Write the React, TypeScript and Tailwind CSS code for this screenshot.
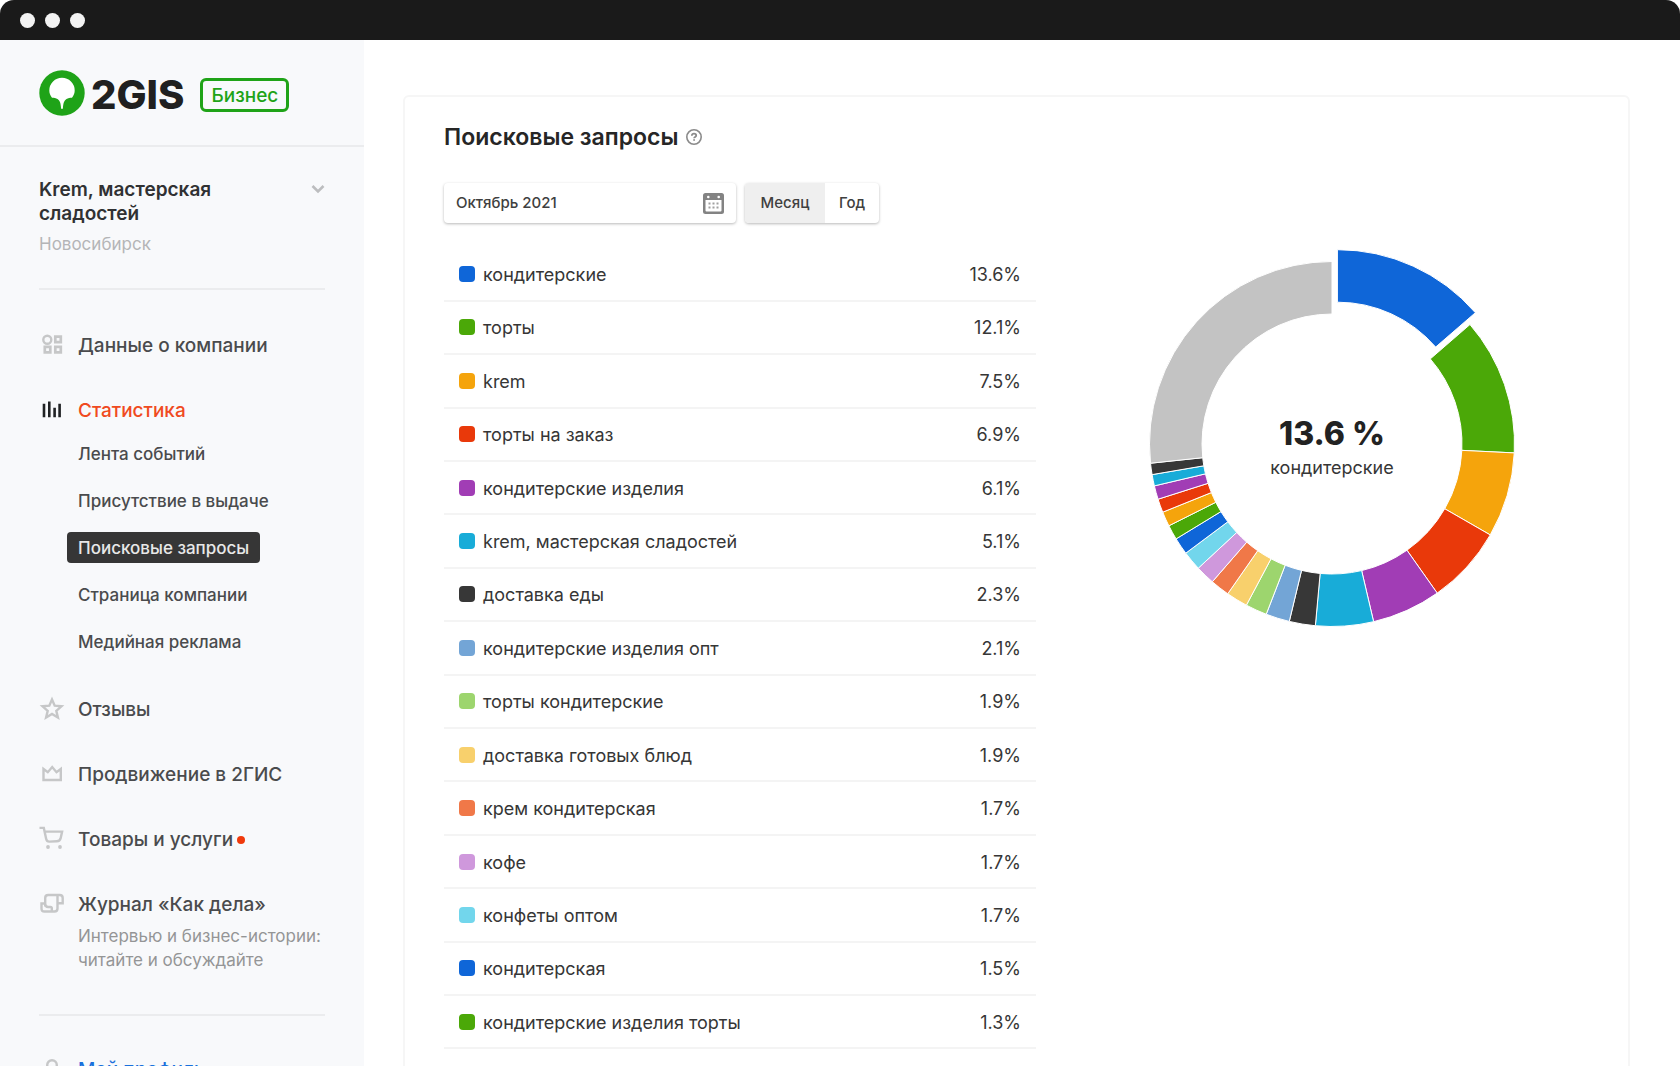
import { useState } from 'react';
import clsx from 'clsx';

type Query = { name: string; value: number; color: string };

const queries: Query[] = [
  { name: 'кондитерские', value: 13.6, color: '#0f66d8' },
  { name: 'торты', value: 12.1, color: '#4ba808' },
  { name: 'krem', value: 7.5, color: '#f5a40c' },
  { name: 'торты на заказ', value: 6.9, color: '#e9390a' },
  { name: 'кондитерские изделия', value: 6.1, color: '#a13db5' },
  { name: 'krem, мастерская сладостей', value: 5.1, color: '#18acd8' },
  { name: 'доставка еды', value: 2.3, color: '#373737' },
  { name: 'кондитерские изделия опт', value: 2.1, color: '#73a5d6' },
  { name: 'торты кондитерские', value: 1.9, color: '#9dd56e' },
  { name: 'доставка готовых блюд', value: 1.9, color: '#f8d06c' },
  { name: 'крем кондитерская', value: 1.7, color: '#f07848' },
  { name: 'кофе', value: 1.7, color: '#cf98dc' },
  { name: 'конфеты оптом', value: 1.7, color: '#72d6ec' },
  { name: 'кондитерская', value: 1.5, color: '#0f66d8' },
  { name: 'кондитерские изделия торты', value: 1.3, color: '#4ba808' },
  { name: 'кремы', value: 1.3, color: '#f5a40c' },
];

// smaller queries and the grey remainder only show up on the chart
const chartOnly = [
  { value: 1.2, color: '#e9390a' },
  { value: 1.2, color: '#a13db5' },
  { value: 1, color: '#18acd8' },
  { value: 1, color: '#373737' },
  { value: 26.6, color: '#c3c3c3' },
];

const statLinks = [
  'Лента событий',
  'Присутствие в выдаче',
  'Поисковые запросы',
  'Страница компании',
  'Медийная реклама',
];

const CENTER = 195;
const OUTER = 182.5;
const INNER = 130;

const point = (angle: number, radius: number) =>
  `${(CENTER + radius * Math.sin(angle)).toFixed(2)} ${(CENTER - radius * Math.cos(angle)).toFixed(2)}`;

const Donut = ({ active, onSelect }: { active: number; onSelect: (index: number) => void }) => {
  const slices = [...queries, ...chartOnly];
  const total = slices.reduce((sum, s) => sum + s.value, 0);
  let start = 0;

  return (
    <svg viewBox="0 0 390 390" className="size-[390px] overflow-visible">
      {slices.map((slice, i) => {
        const from = start;
        const to = from + (slice.value / total) * Math.PI * 2;
        start = to;
        const middle = (from + to) / 2;
        const shift = i === active ? 13 : 0;
        const large = to - from > Math.PI ? 1 : 0;
        return (
          <path
            key={i}
            d={`M${point(from, OUTER)} A${OUTER} ${OUTER} 0 ${large} 1 ${point(to, OUTER)} L${point(to, INNER)} A${INNER} ${INNER} 0 ${large} 0 ${point(from, INNER)} Z`}
            fill={slice.color}
            stroke="#fff"
            transform={`translate(${shift * Math.sin(middle)} ${-shift * Math.cos(middle)})`}
            onClick={() => i < queries.length && onSelect(i)}
          />
        );
      })}
    </svg>
  );
};

const Logo = () => (
  <svg viewBox="0 0 46 46" className="size-[46px] shrink-0">
    <circle cx="23" cy="23" r="22.7" fill="#1fa318" />
    <path
      fill="#fff"
      d="M10.3 20.5a12.7 12.7 0 1 1 25.4 0c0 2.7-1 5.2-2.7 7.2-2 .1-4 .3-5.5 1.3-2.6 1.6-3.3 4.5-3.6 9.7h-1.800c-.3-5.200-1-8.100-3.600-9.700-1.500-1-3.500-1.200-5.500-1.300-1.700-2-2.700-4.500-2.700-7.200z"
    />
  </svg>
);

const iconClass = 'mb-0.5 size-[26px] shrink-0 fill-none stroke-[#c6c7c8] stroke-[2.4px]';

const DataIcon = () => (
  <svg viewBox="0 0 26 26" className={iconClass}>
    <circle cx="8.3" cy="7.7" r="4" />
    <path strokeWidth="2.7" d="M16.3 4.7h5.500v5.500h-5.500zM5.800 14.800h5.500v5.500H5.800zM16.300 14.800h5.500v5.500h-5.500z" />
  </svg>
);

const StatsIcon = () => (
  <svg viewBox="0 0 26 26" className="mb-0.5 size-[26px] shrink-0 fill-[#202224]">
    <path d="M3.7 6.800h2.600v13.400H3.700zM9 4.500h2.600v15.700H9zM14.300 10.800h2.600v9.400h-2.600zM19.300 6.800h2.600v13.400h-2.600z" />
  </svg>
);

const StarIcon = () => (
  <svg viewBox="0 0 26 26" className={iconClass}>
    <path d="M13 3.500l2.700 6.200 6.800.6-5.200 4.600 1.600 6.600-5.900-3.500-5.900 3.500 1.600-6.600-5.200-4.600 6.800-.6z" />
  </svg>
);

const CrownIcon = () => (
  <svg viewBox="0 0 26 26" className={iconClass}>
    <path d="M4.500 8v11H21.800V8l-4.300 3.200L13.200 6 8.800 11.200z" />
  </svg>
);

const CartIcon = () => (
  <svg viewBox="0 0 26 26" className={iconClass}>
    <path d="M.5 1.900h4.300L7.200 13c.4 1.800 1.500 2.700 3.200 2.600l7.400-.3c2-.1 3.300-1 3.800-2.900l1.500-6.800H5.700" />
    <circle cx="9" cy="21" r="1.900" className="fill-[#c6c7c8] stroke-none" />
    <circle cx="21" cy="21" r="1.900" className="fill-[#c6c7c8] stroke-none" />
  </svg>
);

// a newspaper scroll: sheet, right flap and the roll at the bottom left
const JournalIcon = () => (
  <svg viewBox="0 0 26 26" className={iconClass}>
    <path d="M6.200 15.500V7c0-2 1-3 3-3h11.500c2 0 3 1 3 3v5.200h-5.200V4M18.500 12v5.500c0 2-1 3-3 3h-10c-2 0-3-1-3-3v-5h3.700c0 2.300 1 3.500 3 3.500h2.300c.9 0 1.300.4 1.300 1.300v3" />
  </svg>
);

const ProfileIcon = () => (
  <svg viewBox="0 0 26 26" className={iconClass}>
    <circle cx="13" cy="9" r="4.800" />
    <path d="M3 25c0-6 4-8 10-8s10 2 10 8" />
  </svg>
);

const CalendarIcon = () => (
  <svg viewBox="0 0 21 21" className="size-[21px]">
    <rect width="21" height="21" rx="2.500" fill="#838383" />
    <path fill="#fff" d="M2.500 7h16v10.500a1 1 0 0 1-1 1h-14a1 1 0 0 1-1-1z" />
    <circle cx="5.300" cy="4" r="1.300" fill="#fff" />
    <circle cx="15.700" cy="4" r="1.300" fill="#fff" />
    <path
      fill="#a0a0a0"
      d="M5.500 9.500h2v2h-2zM9.500 9.500h2v2h-2zM13.500 9.500h2v2h-2zM5.500 13.500h2v2h-2zM9.500 13.500h2v2h-2zM13.500 13.500h2v2h-2z"
    />
  </svg>
);

const HelpIcon = () => (
  <svg viewBox="0 0 16 16" className="size-4 fill-none stroke-[#8b8b8b]">
    <circle cx="8" cy="8" r="7.200" strokeWidth="1.600" />
    <path strokeWidth="1.800" d="M5.800 6.700c0-1.300.9-2 2.200-2s2.200.7 2.200 1.800c0 1.500-2.100 1.400-2.100 2.800M8.100 10.200v1.500" />
  </svg>
);

const navItem = 'flex h-[65px] items-center gap-[13px] pt-0.5 text-[19px] leading-7 font-medium';

const Sidebar = () => (
  <aside className="w-[364px] shrink-0 bg-[#f8f9fb] text-[#4a4b4d]">
    <a href="#" className="flex h-[107px] items-center border-b-2 border-[#ebecee] px-[39px]">
      <Logo />
      <span className="mt-1 ml-1.5 flex items-center gap-4">
        <span className="text-[40px] leading-none font-extrabold text-[#202020]">2GIS</span>
        <span className="flex h-[34px] items-center rounded-md border-[3px] border-[#1fa318] px-2 pt-0.5 text-[19px] leading-7 font-medium text-[#1fa318]">
          Бизнес
        </span>
      </span>
    </a>
    <div className="px-[39px]">
      <button type="button" className="flex w-full items-start justify-between pt-[31px] text-left">
        <span>
          <span className="block w-[200px] text-[19px] leading-6 font-semibold text-[#303133]">
            Krem, мастерская сладостей
          </span>
          <span className="mt-1.5 block text-[17px] leading-6 text-[#b4b5b7]">Новосибирск</span>
        </span>
        <svg viewBox="0 0 14 10" className="mt-1.5 h-2.5 w-3.5 fill-none stroke-[#bcbdbf] stroke-[2.6px]">
          <path d="M1.500 2l5.500 5.500L12.500 2" />
        </svg>
      </button>
      <nav className="mt-8 border-t-2 border-[#ebecee] pt-[22px]">
        <a href="#" className={navItem}>
          <DataIcon />
          Данные о компании
        </a>
        <a href="#" className={clsx(navItem, 'text-[#f04a20]')}>
          <StatsIcon />
          Статистика
        </a>
        <ul className="-mt-3 mb-[11px] ml-7">
          {statLinks.map((label) => (
            <li key={label} className="flex h-[47px] items-center">
              <a
                href="#"
                className={clsx(
                  'flex h-[31px] items-center rounded-sm px-[11px] text-[17px] leading-6 font-medium',
                  label === 'Поисковые запросы' && 'bg-[#363636] text-[#e8e8e8]'
                )}
              >
                {label}
              </a>
            </li>
          ))}
        </ul>
        <a href="#" className={navItem}>
          <StarIcon />
          Отзывы
        </a>
        <a href="#" className={navItem}>
          <CrownIcon />
          Продвижение в 2ГИС
        </a>
        <a href="#" className={navItem}>
          <CartIcon />
          <span className="flex items-center gap-1">
            Товары и услуги
            <span className="size-2 rounded-full bg-[#f03a0c]" />
          </span>
        </a>
        <a href="#" className={navItem}>
          <JournalIcon />
          Журнал «Как дела»
        </a>
        <p className="-mt-3 ml-[39px] text-[17px] leading-6 whitespace-nowrap text-[#949596]">
          Интервью и бизнес-истории:
          <br />
          читайте и обсуждайте
        </p>
      </nav>
      <div className="mt-[42px] border-t-2 border-[#ebecee] pt-5">
        <a href="#" className={clsx(navItem, 'text-[#1a70dc]')}>
          <ProfileIcon />
          Мой профиль
        </a>
      </div>
    </div>
  </aside>
);

const App = () => {
  const [period, setPeriod] = useState('Месяц');
  const [date, setDate] = useState('Октябрь 2021');
  const [active, setActive] = useState(0);

  return (
    <div className="flex h-screen flex-col overflow-hidden bg-white font-['Inter',sans-serif]">
      <header className="flex h-10 shrink-0 items-center gap-[10px] rounded-t-[14px] bg-[#1a1a1a] px-5">
        <span className="size-[15px] rounded-full bg-[#f3f3f3]" />
        <span className="size-[15px] rounded-full bg-[#f3f3f3]" />
        <span className="size-[15px] rounded-full bg-[#f3f3f3]" />
      </header>
      <div className="flex min-h-0 flex-1 items-start">
        <Sidebar />
        <main className="min-w-0 flex-1 pt-[55px] pr-[50px] pl-[39px]">
          <section className="rounded-md border-2 border-[#f6f6f6] pt-6 pb-10 pl-[39px]">
            <div className="flex items-center gap-2">
              <h1 className="text-[23px] leading-8 font-semibold text-[#262626]">Поисковые запросы</h1>
              <button type="button" aria-label="Справка">
                <HelpIcon />
              </button>
            </div>
            <div className="mt-[30px] flex gap-[9px]">
              <label className="flex h-10 w-[292px] items-center rounded-sm bg-white px-3 shadow-[0_1px_3px_rgba(0,0,0,0.28)]">
                <input
                  type="text"
                  aria-label="Период"
                  value={date}
                  onChange={(e) => setDate(e.target.value)}
                  className="min-w-0 flex-1 text-[15px] font-medium text-[#404040] outline-none"
                />
                <CalendarIcon />
              </label>
              <div className="flex h-10 overflow-hidden rounded-sm shadow-[0_1px_3px_rgba(0,0,0,0.28)]">
                {['Месяц', 'Год'].map((label) => (
                  <button
                    key={label}
                    type="button"
                    onClick={() => setPeriod(label)}
                    className={clsx(
                      'text-[15px] font-medium text-[#404040]',
                      label === 'Месяц' ? 'w-20' : 'w-[54px]',
                      period === label && 'bg-[#efefef]'
                    )}
                  >
                    {label}
                  </button>
                ))}
              </div>
            </div>
            <div className="mt-[26px] grid grid-cols-2">
              <table className="h-[854px] w-full text-lg text-[#363636]">
                <tbody>
                  {queries.map((query, i) => (
                    <tr key={query.name} className="border-b-2 border-[#f4f4f4]" onClick={() => setActive(i)}>
                      <td className="py-0 pl-[15px]">
                        <span className="flex items-center gap-2">
                          <span className="size-4 rounded-sm" style={{ backgroundColor: query.color }} />
                          <span className="pt-0.5">{query.name}</span>
                        </span>
                      </td>
                      <td className="pt-0.5 pr-[15px] pb-0 text-right">{query.value}%</td>
                    </tr>
                  ))}
                </tbody>
              </table>
              <div className="flex justify-center">
                <div className="relative size-[390px]">
                  <Donut active={active} onSelect={setActive} />
                  <div className="pointer-events-none absolute inset-0 flex flex-col items-center justify-center pt-2">
                    <span className="text-[32px] leading-10 font-extrabold text-[#222]">{queries[active].value} %</span>
                    <span className="text-lg leading-7 text-[#363636]">{queries[active].name}</span>
                  </div>
                </div>
              </div>
            </div>
          </section>
        </main>
      </div>
    </div>
  );
};

export default App;
